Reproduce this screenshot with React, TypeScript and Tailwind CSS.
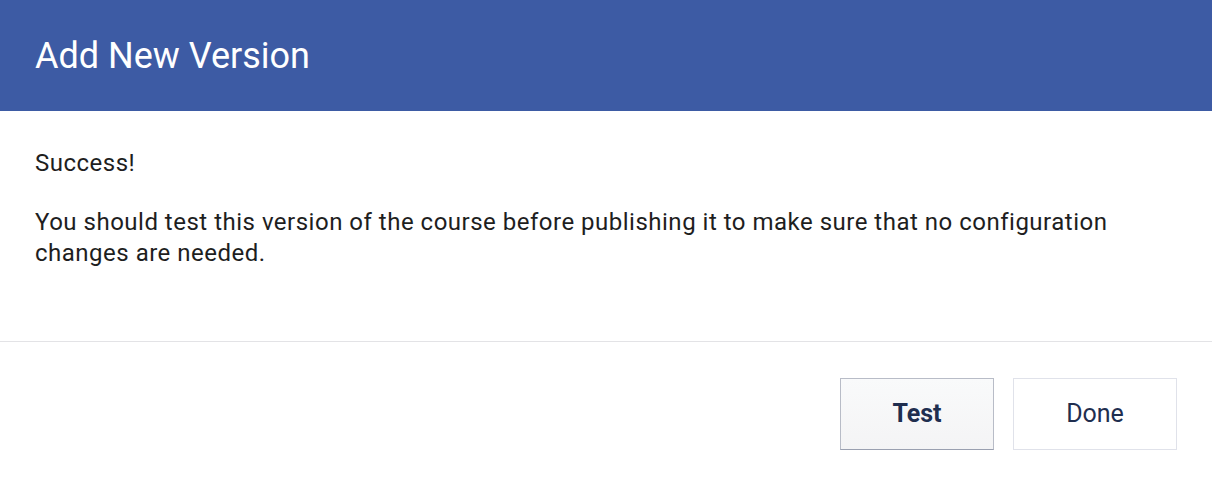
import React from 'react';

export default function App() {
  return (
    <div className="w-[1212px] h-[484px] bg-white flex flex-col" style={{ fontFamily: 'Roboto, "Noto Sans", sans-serif' }}>
      {/* Header */}
      <div className="h-[111px] bg-[#3d5ba4] flex items-center px-[35px]">
        <h1 className="text-[36px] text-white font-normal leading-none">Add New Version</h1>
      </div>

      {/* Body */}
      <div className="h-[231px] px-[35px] pt-[37px] text-[24px] tracking-[0.5px] leading-[31px] text-[#1e1e1e] border-b border-[#e3e3e6]">
        <p>Success!</p>
        <p className="mt-[28px]">
          You should test this version of the course before publishing it to make sure that no configuration changes are needed.
        </p>
      </div>

      {/* Footer */}
      <div className="flex justify-end gap-[19px] px-[35px] pt-[36px]">
        <button className="w-[154px] h-[72px] border border-[#b8bcc7] border-b-[#9aa0b0] bg-gradient-to-b from-[#f9fafb] to-[#f4f4f5] text-[25px] font-bold text-[#1f2e4f]">
          Test
        </button>
        <button className="w-[164px] h-[72px] border border-[#e0e2ea] bg-white text-[25px] font-normal text-[#1f2e4f]">
          Done
        </button>
      </div>
    </div>
  );
}
